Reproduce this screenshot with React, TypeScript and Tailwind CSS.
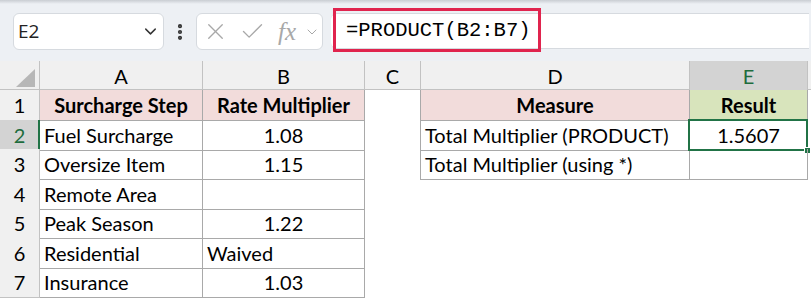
import { ChevronDown, EllipsisVertical, X, Check } from 'lucide-react'

const cols = ['A', 'B', 'C', 'D', 'E']
const heights = ['h-[30px]', 'h-[29px]', 'h-[30px]', 'h-[29px]', 'h-[30px]', 'h-[29px]', 'h-[30px]']

const rows: string[][] = [
  ['Surcharge Step', 'Rate Multiplier', '', 'Measure', 'Result'],
  ['Fuel Surcharge', '1.08', '', 'Total Multiplier (PRODUCT)', '1.5607'],
  ['Oversize Item', '1.15', '', 'Total Multiplier (using *)', ''],
  ['Remote Area', '', '', '', ''],
  ['Peak Season', '1.22', '', '', ''],
  ['Residential', 'Waived', '', '', ''],
  ['Insurance', '1.03', '', '', ''],
]

const grid = 'grid grid-cols-[40px_163px_162px_56px_269px_118px_1fr]'

export default function App() {
  return (
    <div className="w-[811px] h-[298px] overflow-hidden bg-white font-['Lato',sans-serif] text-[20px] text-black">
      {/* formula bar */}
      <div className="relative h-[61px] bg-[#edf0f4] flex items-start pt-[13px]">
        <div className="absolute top-0 left-0 right-0 h-[4px] bg-gradient-to-b from-[#c9cdd2] to-transparent" />
        <div className="ml-[13px] w-[151px] h-[37px] bg-white border border-[#d6dadf] rounded-[6px] flex items-center justify-between pl-[4px] pr-[3px]">
          <span className="font-['Open_Sans',sans-serif] text-[19px] text-[#222]">E2</span>
          <ChevronDown className="w-[19px] h-[19px] text-[#333]" strokeWidth={1.8} />
        </div>
        <div className="w-[32px] h-[37px] flex items-center justify-center">
          <EllipsisVertical className="w-[20px] h-[20px] text-[#333]" strokeWidth={3} />
        </div>
        <div className="w-[127px] h-[37px] bg-white border border-[#d6dadf] rounded-[6px] flex items-center pl-[5px] text-[#a8a8a8]">
          <X className="w-[27px] h-[27px]" strokeWidth={1.2} />
          <Check className="w-[27px] h-[27px] ml-[10px]" strokeWidth={1.2} />
          <span className="ml-[12px] font-['Liberation_Serif',serif] italic text-[25px] leading-none">fx</span>
          <ChevronDown className="w-[16px] h-[16px] ml-[8px]" strokeWidth={1.5} />
        </div>
        <div className="relative ml-[8px] w-[478px] h-[36px] bg-white border-y border-[#d6dadf] rounded-l-[6px] flex items-center">
          <div className="absolute -top-[6px] left-[2px] w-[208px] h-[44px] border-[3px] border-[#e0244e]" />
          <span className="ml-[15px] font-['Liberation_Mono',monospace] text-[20.5px] text-black">=PRODUCT(B2:B7)</span>
        </div>
      </div>

      {/* column headers */}
      <div className={`${grid} h-[29px] bg-[#f0f0f0] border-b border-[#c2c2c2]`}>
        <div className="relative border-r border-[#c2c2c2]">
          <div className="absolute right-[4px] bottom-[4px] w-0 h-0 border-l-[19px] border-l-transparent border-b-[18px] border-b-[#b7b7b7]" />
        </div>
        {cols.map((c) =>
          c === 'E' ? (
            <div key={c} className="relative bg-[#d3d3d3] border-r border-[#c2c2c2] flex items-center justify-center text-[#1e6c3d]">
              {c}
              <div className="absolute left-0 right-0 -bottom-px h-[2px] bg-[#217346]" />
            </div>
          ) : (
            <div key={c} className="border-r border-[#c2c2c2] flex items-center justify-center">
              {c}
            </div>
          ),
        )}
        <div />
      </div>

      {/* body */}
      {rows.map((r, i) => {
        const head = i === 0
        const inRight = i < 3
        return (
          <div key={i} className={`${grid} ${heights[i]}`}>
            <div
              className={`relative flex items-center justify-center border-b border-[#c2c2c2] ${
                i === 1 ? 'bg-[#d3d3d3] text-[#1e6c3d]' : 'bg-[#f0f0f0]'
              } border-r border-[#c2c2c2]`}
            >
              {i + 1}
              {i === 1 && <div className="absolute top-0 bottom-0 -right-px w-[2px] bg-[#217346]" />}
            </div>
            <div
              className={`flex items-center border-r border-b border-[#a9a9a9] ${
                head ? 'bg-[#f2dcdb] justify-center font-bold' : 'pl-[4px]'
              }`}
            >
              {r[0]}
            </div>
            <div
              className={`flex items-center border-r border-b border-[#a9a9a9] ${
                head ? 'bg-[#f2dcdb] justify-center font-bold' : r[1] === 'Waived' ? 'pl-[4px]' : 'justify-center'
              }`}
            >
              {r[1]}
            </div>
            <div className={inRight ? 'border-r border-[#a9a9a9]' : ''} />
            <div
              className={`flex items-center ${inRight ? 'border-r border-b border-[#a9a9a9]' : ''} ${
                head ? 'bg-[#f2dcdb] justify-center font-bold' : 'pl-[4px]'
              }`}
            >
              {r[3]}
            </div>
            <div
              className={`relative flex items-center justify-center ${inRight ? 'border-r border-b border-[#a9a9a9]' : ''} ${
                head ? 'bg-[#d8e4bc] font-bold' : ''
              }`}
            >
              {r[4]}
              {i === 1 && (
                <>
                  <div className="absolute -top-px -left-[2px] -right-px -bottom-px border-2 border-[#217346]" />
                  <div className="absolute -right-[4px] -bottom-[4px] w-[7px] h-[7px] bg-[#217346] border border-white" />
                </>
              )}
            </div>
            <div />
          </div>
        )
      })}
    </div>
  )
}
